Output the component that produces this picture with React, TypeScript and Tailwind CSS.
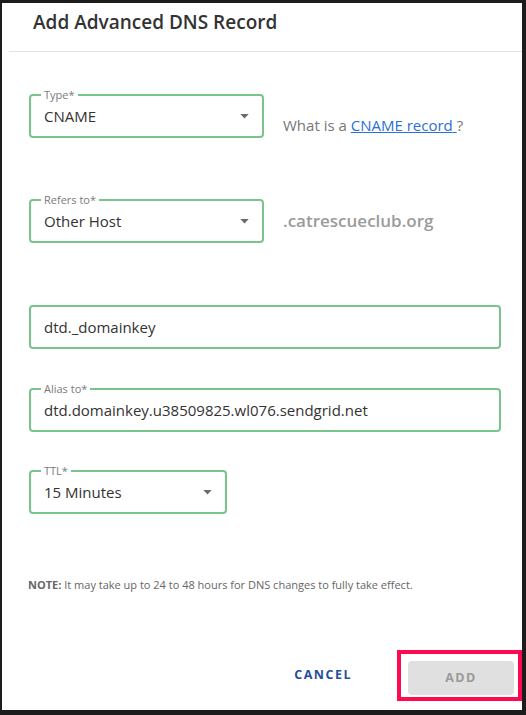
import { ReactNode } from "react"

const font = { fontFamily: '"Open Sans", "Noto Sans", sans-serif' }

function Caret() {
  return (
    <svg width="9" height="5" viewBox="0 0 10 6" className="shrink-0">
      <path d="M0 0 L10 0 L5 5.5 Z" fill="#6b6b6b" />
    </svg>
  )
}

function Field({
  label,
  value,
  width,
  select,
}: {
  label?: string
  value: string
  width: string
  select?: boolean
}) {
  return (
    <div className={`relative h-[44px] ${width} shrink-0 rounded-[4px] border-2 border-[#7ac48c] pl-[13px] pr-[13px] flex items-center justify-between`}>
      {label && (
        <span className="absolute -top-[8px] left-[10px] bg-white px-[3px] text-[11px] leading-[13px] text-[#7a7a7a]">
          {label}
        </span>
      )}
      <span className="text-[15px] text-[#333]">{value}</span>
      {select && <Caret />}
    </div>
  )
}

function Row({ children, className = "" }: { children: ReactNode; className?: string }) {
  return <div className={`flex ${className}`}>{children}</div>
}

export default function App() {
  return (
    <div className="w-[526px] h-[715px] bg-[#1c1c1c] pt-[3px] pl-[2px]" style={font}>
      <div className="w-[520px] h-[707px] bg-white flex flex-col">
        {/* Header */}
        <div className="h-[48px] pt-[6px] pl-[31px]">
          <h2 className="text-[19px] leading-[26px] font-semibold text-[#333]">Add Advanced DNS Record</h2>
        </div>
        <div className="ml-[7px] h-px bg-[#e3e3e3]" />

        {/* Body */}
        <div className="pl-[27px] pr-[20px] pt-[42px] flex flex-col">
          <Row className="items-start">
            <Field label="Type*" value="CNAME" width="w-[235px]" select />
            <p className="ml-[19px] mt-[20px] text-[15px] text-[#777]">
              What is a{" "}
              <a href="#" className="text-[#2a6fdb] underline">
                CNAME record{" "}
              </a>
              ?
            </p>
          </Row>

          <Row className="items-center mt-[61px]">
            <Field label="Refers to*" value="Other Host" width="w-[235px]" select />
            <span className="ml-[19px] text-[17px] font-semibold text-[#9b9b9b]">.catrescueclub.org</span>
          </Row>

          <div className="mt-[62px]">
            <Field value="dtd._domainkey" width="w-[472px]" />
          </div>

          <div className="mt-[39px]">
            <Field label="Alias to*" value="dtd.domainkey.u38509825.wl076.sendgrid.net" width="w-[472px]" />
          </div>

          <div className="mt-[38px]">
            <Field label="TTL*" value="15 Minutes" width="w-[198px]" select />
          </div>

          <p className="mt-[64px] -ml-[1px] text-[11px] leading-[14px] text-[#666]">
            <span className="font-bold">NOTE:</span> It may take up to 24 to 48 hours for DNS changes to fully take effect.
          </p>
        </div>

        {/* Footer */}
        <div className="mt-auto mb-[9px] flex items-center justify-end">
          <button className="text-[12.5px] font-bold tracking-[1.5px] text-[#1f4f9c] mr-[45px]">CANCEL</button>
          <div className="border-[4px] border-[#ff0a50] p-[7px] pr-[4px] pb-[2px] pt-[7px]">
            <button className="w-[106px] h-[34px] rounded-[4px] bg-[#e0e0e0] text-[12.5px] font-bold tracking-[1.5px] text-[#9a9a9a]">
              ADD
            </button>
          </div>
        </div>
      </div>
    </div>
  )
}
